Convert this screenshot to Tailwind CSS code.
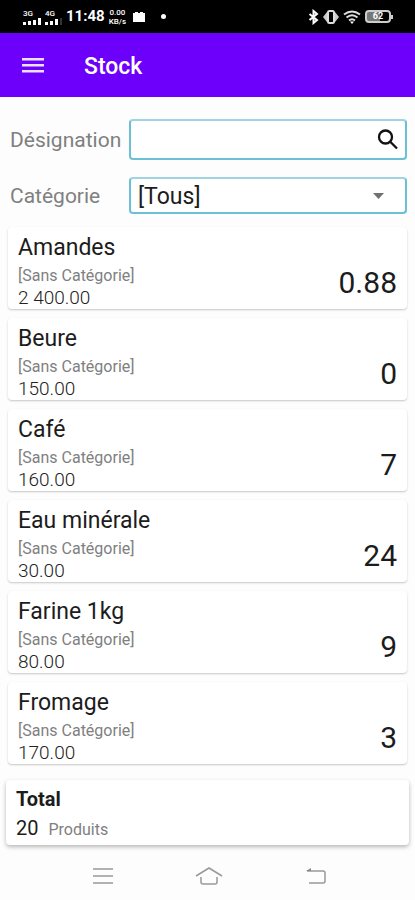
<!DOCTYPE html>
<html lang="fr">
<head>
<meta charset="utf-8">
<meta name="viewport" content="width=device-width, initial-scale=1">
<title>Stock</title>
<script src="https://cdn.jsdelivr.net/npm/@tailwindcss/browser@4"></script>
</head>
<body class="flex min-h-screen flex-col bg-[#fdfdfd] font-[Roboto,sans-serif] text-[#1c1c1c]">
  <div class="flex h-[33px] items-center bg-black pl-[23px] pr-[22px] text-white">
    <div class="flex items-center gap-1">
      <div class="flex flex-col">
        <span class="text-[8px] leading-[9px] font-medium">3G</span>
        <svg class="h-[7px] w-[18px]" viewBox="0 0 18 7" fill="#fff"><path d="M0 4h3v3H0zM5 3h3v4H5zM10 2h3v5h-3zM15 0h3v7h-3z"/></svg>
      </div>
      <div class="flex flex-col">
        <span class="text-[8px] leading-[9px] font-medium">4G</span>
        <svg class="h-[7px] w-[18px]" viewBox="0 0 18 7" fill="#fff"><path d="M0 4h3v3H0zM5 3h3v4H5zM10 1h3v6h-3z"/><path fill="#333" d="M15 0h2v7h-2z"/></svg>
      </div>
    </div>
    <span class="ml-[3px] text-[15px] font-bold">11:48</span>
    <div class="ml-1 flex flex-col text-center text-[8px] leading-[9px] font-medium"><span>0.00</span><span>KB/s</span></div>
    <svg class="ml-[6px] h-3 w-[14px]" viewBox="0 0 14 12" fill="#fff"><path d="M1 2h2V1h3v1h2V1h3v1h2v9H1z"/></svg>
    <span class="ml-[15px] size-[5px] rounded-full bg-white"></span>
    <div class="ml-auto flex items-center gap-1">
      <svg class="h-4 w-[11px]" viewBox="0 0 11 16" fill="none" stroke="#fff" stroke-width="2"><path d="M1.500 5l7.500 6-3.500 3V2l3.500 3-7.500 6"/></svg>
      <svg class="h-4 w-4" viewBox="0 0 16 16"><path d="M4 3L0 8l4 5zM12 3l4 5-4 5z" fill="#ccc"/><rect x="5" y="2" width="6" height="12" rx="1.500" fill="none" stroke="#ddd" stroke-width="2"/></svg>
      <svg class="h-4 w-[18px]" viewBox="0 0 18 16" fill="none" stroke="#ddd" stroke-width="2"><path d="M1 5.500Q9-.5 17 5.500M3.500 8.500q5.500-4.500 11 0M6 11.500q3-2.500 6 0"/><path d="M7 12.500h4l-2 2.500z" fill="#fff" stroke="none"/></svg>
      <div class="flex items-center">
        <span class="flex h-[13px] w-[26px] items-center justify-center rounded-[4px] border-2 border-[#ccc] bg-linear-to-r from-[#777] from-60% to-black to-60% text-[9px] leading-none font-bold">62</span>
        <span class="h-1 w-[2px] bg-[#ccc]"></span>
      </div>
    </div>
  </div>

  <header class="flex h-16 items-center bg-[#6c00fa] pl-[22px] text-white">
    <button type="button" aria-label="Menu" class="mr-[39px]">
      <svg class="h-[17px] w-[23px]" viewBox="0 0 23 17" fill="#ede0ff"><path d="M0 1h22v2.500H0zM0 7h22v2.500H0zM0 13h22v2.500H0z"/></svg>
    </button>
    <h1 class="pt-1 text-[23px] font-medium">Stock</h1>
  </header>

  <main class="flex flex-col">
    <form class="flex flex-col gap-[17px] pt-[22px] pr-2 pl-[10px]">
      <div class="flex items-center">
        <label for="designation" class="w-[119px] shrink-0 text-[21px] leading-6 text-[#808080]">Désignation</label>
        <div class="flex h-[41px] min-w-0 flex-1 items-center rounded-[4px] border-2 border-[#6cc0d6] border-t-[#a0d4e2] bg-white pr-[6px]">
          <input id="designation" type="text" class="h-full min-w-0 flex-1 px-2 text-[23px] outline-none">
          <button type="button" aria-label="Rechercher">
            <svg class="h-[22px] w-[22px]" viewBox="0 0 22 22" fill="none" stroke="#111" stroke-width="2.300"><circle cx="8.500" cy="8" r="6.500"/><path d="M13 12.500l7 7"/></svg>
          </button>
        </div>
      </div>
      <div class="flex items-center">
        <label for="categorie" class="w-[119px] shrink-0 text-[21px] leading-6 text-[#808080]">Catégorie</label>
        <div class="grid h-[37px] min-w-0 flex-1 items-center">
          <select id="categorie" class="col-start-1 row-start-1 h-full w-full appearance-none rounded-[4px] border-2 border-[#6cc0d6] border-t-[#a0d4e2] bg-white pt-[2px] pl-[7px] text-[23px] leading-7 font-normal outline-none"><option>[Tous]</option></select>
          <svg class="pointer-events-none col-start-1 row-start-1 mr-[23px] h-[6px] w-[11px] justify-self-end" viewBox="0 0 11 6" fill="#707070"><path d="M0 0h11L5.500 6z"/></svg>
        </div>
      </div>
    </form>

    <ul class="flex flex-col gap-[9px] px-2 pt-[13px]">
      <li class="flex justify-between rounded-[4px] bg-white px-[10px] pt-1 pb-px shadow-[0_1px_2px_rgba(0,0,0,0.22)]">
        <div><h2 class="text-[23px] leading-[33px]">Amandes</h2><p class="text-[16px] leading-6 text-[#808080]">[Sans Catégorie]</p><p class="text-[19px] leading-5 font-light text-[#222]">2 400.00</p></div>
        <span class="mb-[5px] self-end text-[30px] leading-10">0.88</span>
      </li>
      <li class="flex justify-between rounded-[4px] bg-white px-[10px] pt-1 pb-px shadow-[0_1px_2px_rgba(0,0,0,0.22)]">
        <div><h2 class="text-[23px] leading-[33px]">Beure</h2><p class="text-[16px] leading-6 text-[#808080]">[Sans Catégorie]</p><p class="text-[19px] leading-5 font-light text-[#222]">150.00</p></div>
        <span class="mb-[5px] self-end text-[30px] leading-10">0</span>
      </li>
      <li class="flex justify-between rounded-[4px] bg-white px-[10px] pt-1 pb-px shadow-[0_1px_2px_rgba(0,0,0,0.22)]">
        <div><h2 class="text-[23px] leading-[33px]">Café</h2><p class="text-[16px] leading-6 text-[#808080]">[Sans Catégorie]</p><p class="text-[19px] leading-5 font-light text-[#222]">160.00</p></div>
        <span class="mb-[5px] self-end text-[30px] leading-10">7</span>
      </li>
      <li class="flex justify-between rounded-[4px] bg-white px-[10px] pt-1 pb-px shadow-[0_1px_2px_rgba(0,0,0,0.22)]">
        <div><h2 class="text-[23px] leading-[33px]">Eau minérale</h2><p class="text-[16px] leading-6 text-[#808080]">[Sans Catégorie]</p><p class="text-[19px] leading-5 font-light text-[#222]">30.00</p></div>
        <span class="mb-[5px] self-end text-[30px] leading-10">24</span>
      </li>
      <li class="flex justify-between rounded-[4px] bg-white px-[10px] pt-1 pb-px shadow-[0_1px_2px_rgba(0,0,0,0.22)]">
        <div><h2 class="text-[23px] leading-[33px]">Farine 1kg</h2><p class="text-[16px] leading-6 text-[#808080]">[Sans Catégorie]</p><p class="text-[19px] leading-5 font-light text-[#222]">80.00</p></div>
        <span class="mb-[5px] self-end text-[30px] leading-10">9</span>
      </li>
      <li class="flex justify-between rounded-[4px] bg-white px-[10px] pt-1 pb-px shadow-[0_1px_2px_rgba(0,0,0,0.22)]">
        <div><h2 class="text-[23px] leading-[33px]">Fromage</h2><p class="text-[16px] leading-6 text-[#808080]">[Sans Catégorie]</p><p class="text-[19px] leading-5 font-light text-[#222]">170.00</p></div>
        <span class="mb-[5px] self-end text-[30px] leading-10">3</span>
      </li>
    </ul>

    <section class="mx-[6px] mt-4 rounded-[4px] bg-white px-[10px] pt-1 pb-px shadow-[0_2px_4px_rgba(0,0,0,0.28)]">
      <h2 class="text-[20px] leading-[30px] font-bold">Total</h2>
      <p class="flex items-baseline gap-[10px] leading-[29px]"><span class="text-[20px]">20</span><span class="text-[16px] text-[#808080]">Produits</span></p>
    </section>
  </main>

  <nav class="mt-auto flex h-12 items-center justify-center gap-[82px] pl-1">
    <button type="button" aria-label="Applications récentes"><svg class="h-5 w-5" viewBox="0 0 20 20" fill="none" stroke="#999" stroke-width="1.500"><path d="M0 3h20M0 10h20M0 17h20"/></svg></button>
    <button type="button" aria-label="Accueil"><svg class="h-5 w-7" viewBox="0 0 28 20" fill="none" stroke="#999" stroke-width="1.500"><path d="M1 10L14 2l13 8M6 11v5q0 2 2 2h12q2 0 2-2v-5"/></svg></button>
    <button type="button" aria-label="Retour"><svg class="h-5 w-[22px]" viewBox="0 0 22 20" fill="none" stroke="#999" stroke-width="1.500"><path d="M2 5h16q2 0 2 2v8q0 2-2 2H4"/><path d="M1 5l5-3v3z" fill="#888" stroke="none"/></svg></button>
  </nav>
</body>
</html>
